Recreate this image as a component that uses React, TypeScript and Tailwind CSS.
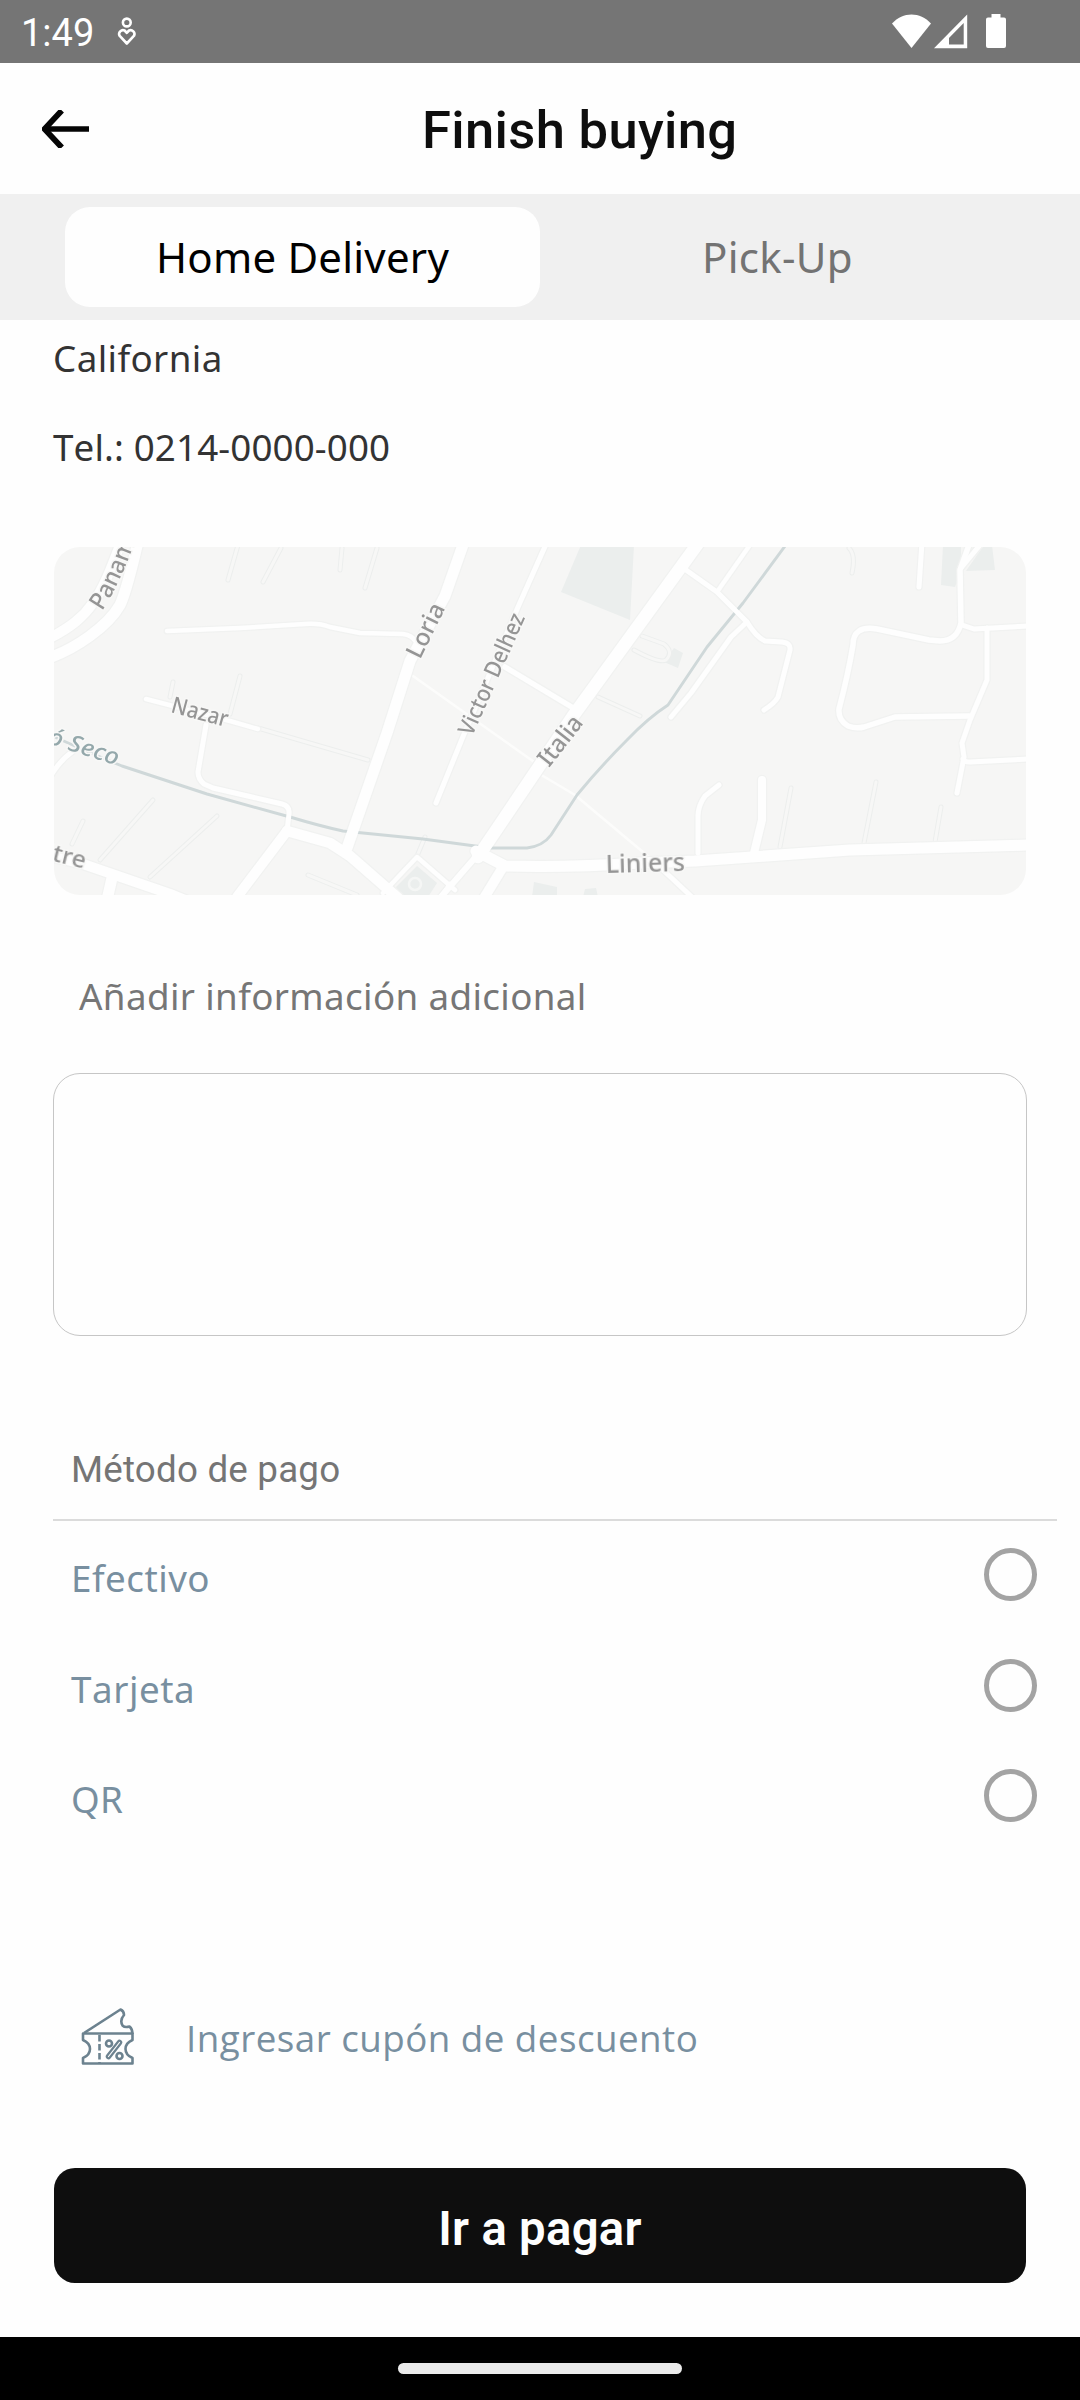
import React from 'react';

function StatusBar() {
  return (
    <header className="flex h-[63px] items-center bg-[#757575] text-white">
      <span className="ml-[21px] mt-[3px] w-[74px] font-[Roboto,sans-serif] text-[38px] leading-[60px]">1:49</span>
      <svg className="ml-[20px]" width="24" height="63" viewBox="115 0 24 63" fill="none" stroke="currentColor" strokeWidth="2.6">
        <circle cx="126.800" cy="22.5" r="3.9" />
        <path d="M126.800 43.500l-7.300-7.800a3.900 3.900 0 0 1 5.100-5.200l2.200 2.400 2.200-2.400a3.900 3.900 0 0 1 5.100 5.200z" strokeLinejoin="round" />
      </svg>
      <svg className="ml-auto mr-[70px]" width="120" height="63" viewBox="890 0 120 63" fill="currentColor">
        <path d="M892 23.5C903 11.5 920 11.5 931 23.5L911.5 48z" />
        <path fillRule="evenodd" d="M967.2 14.5V48.3H934zM963.7 23L949 38V44.5H963.7z" />
        <path d="M991.5 16.5V14h9v3.5h3.5a2 2 0 0 1 2 2V46a2 2 0 0 1-2 2h-16a2 2 0 0 1-2-2V19.500a2 2 0 0 1 2-2h3.500z" />
      </svg>
    </header>
  );
}

function TitleBar() {
  return (
    <div className="flex h-[131px] items-center">
      <svg className="ml-[42px]" width="48" height="38" viewBox="42 109.500 48 38" fill="none" stroke="#050505">
        <path d="M45 128.500H89" strokeWidth="5.600" />
        <path d="M61.800 110L44.500 128.500L61.800 147" strokeWidth="5.800" />
      </svg>
      <h1 className="ml-[332px] whitespace-nowrap pt-[3px] font-[Roboto,sans-serif] text-[52.500px] font-medium leading-[60px] tracking-[0.35px] text-[#0e0e0e]">
        Finish buying
      </h1>
    </div>
  );
}

function Tabs() {
  return (
    <div className="flex h-[126px] items-center bg-[#f0f0f0] px-[65px] text-[42px]">
      <button className="h-[100px] w-[475px] rounded-[25px] bg-[#fefefe] pb-[2px] tracking-[0.22px] text-black">Home Delivery</button>
      <button className="h-[100px] w-[475px] pb-[2px] tracking-[0.3px] text-[#737373]">Pick-Up</button>
    </div>
  );
}

const streets: { d: string; w: number }[] = [
  { d: 'M46 640C72 627 84 616 93 603C104 588 112 566 120 545', w: 10 },
  { d: 'M46 659C76 649 108 626 120 605C127 590 132 566 138 542', w: 11 },
  { d: 'M167 631L240 628L305 624Q320 623 330 627L360 633L403 634Q412 635 416 642', w: 4.5 },
  { d: 'M464 542L445 596L410 661L387 733L347 848', w: 11 },
  { d: 'M146 699L173 706L230 721L258 729', w: 4.5 },
  { d: 'M206 725L198 772Q198 779 204 784L213 788L282 804Q290 806 289 814L287 831', w: 5 },
  { d: 'M287 831L330 843L350 856L398 898', w: 10.5 },
  { d: 'M287 831L237 897', w: 10 },
  { d: 'M46 855L83 864L173 895L190 902', w: 10 },
  { d: 'M112 878L107 900', w: 11 },
  { d: 'M48 780Q60 760 72 752', w: 5 },
  { d: 'M547 542L518 607L462 739L436 803', w: 5 },
  { d: 'M505 667L575 709', w: 5.5 },
  { d: 'M699 542L573 716L538 768L480 852L440 898', w: 6 },
  { d: 'M699 542L573 716L538 768L478 857', w: 12.5 },
  { d: 'M476 851L505 866C540 867 580 867 640 863L695 861L850 850L1030 845', w: 11 },
  { d: 'M503 867L484 898', w: 10 },
  { d: 'M383 893L417 857L455 890M450 884L440 898', w: 4.5 },
  { d: 'M686 570L717 592L747 622Q756 637 765 641L782 642Q791 643 790 650L778 697Q775 703 764 710', w: 5 },
  { d: 'M752 542L717 592', w: 4.5 },
  { d: 'M747 622L731 637L691 693L671 717', w: 5 },
  { d: 'M922 542L919 587', w: 5 },
  { d: 'M970 542L960 570L961 623Q957 641 940 641L929 640L877 629Q853 625 853 645Q848 675 839 709Q838 720 848 726Q856 729 864 727L895 717L969 716', w: 5.5 },
  { d: 'M980 545L961 568', w: 5 },
  { d: 'M962 625L974 629L1030 626', w: 5 },
  { d: 'M987 628L987 680L970 720L962 743L964 757L957 793', w: 5 },
  { d: 'M963 759Q964 762 970 762L1030 759', w: 5 },
  { d: 'M719 785L705 796Q698 806 698 816L698 853', w: 5 },
  { d: 'M762 780L762 820L754 853', w: 8 },
  { d: 'M662 869L694 899', w: 5 },
];

const alleys: string[] = [
  'M238 545L228 580', 'M281 548L263 582', 'M342 548L340 570', 'M377 548L365 588',
  'M240 676L230 714', 'M173 682L170 697', 'M153 800L100 860', 'M217 816L150 877',
  'M83 821L72 844', 'M308 875L357 895', 'M258 728L368 760', 'M425 837L417 856',
  'M791 788L780 847', 'M876 782L864 843', 'M941 807L935 842', 'M849 548Q856 555 852 573',
  'M598 697L640 716', 'M642 636L664 644Q674 652 666 660Q660 664 634 650',
];

const labels: { t: string; x: number; y: number; r: number; l: number; s: number }[] = [
  { t: 'Loria', x: 420, y: 660, r: -64, l: 58, s: 24 },
  { t: 'Victor Delhez', x: 472, y: 737, r: -66, l: 131, s: 23 },
  { t: 'Italia', x: 549, y: 768, r: -52, l: 57, s: 24 },
  { t: 'Nazar', x: 170, y: 712, r: 15, l: 58, s: 23 },
  { t: 'Liniers', x: 606, y: 873, r: -1.5, l: 79, s: 25 },
];

function DeliveryMap() {
  return (
    <svg className="mt-[75px] block w-[972px] rounded-[26px]" height="348" viewBox="54 547 972 348">
      <rect x="54" y="547" width="972" height="348" fill="#f6f6f5" />
      <g fill="#ebeeed">
        <path d="M581 545L634 545L630 620L561 592Z" />
        <path d="M674 648L683 653L678 668L664 662Z" />
        <path d="M943 545H961V570L955 587L941 585Z" />
        <path d="M966 571L984 545H992L995 570Z" />
        <path d="M534 882L557 887V897H532Z" />
        <path d="M585 889L596 888L598 897H583Z" />
        <path d="M417 866L437 883L428 897H400L396 887Z" />
      </g>
      <g fill="none" strokeLinecap="round" strokeLinejoin="round" className="blur-[0.4px]">
        <g stroke="#eceeed" strokeWidth="5">{alleys.map((d) => <path key={d} d={d} />)}</g>
        <g stroke="#f7f7f6" strokeWidth="3">{alleys.map((d) => <path key={d} d={d} />)}</g>
        <path d="M413 676L537 764M538 773L575 795L662 868" stroke="#fcfcfb" strokeWidth="2.500" />
        <g stroke="#f1f2f1">{streets.map(({ d, w }) => <path key={d} d={d} strokeWidth={w + 2.5} />)}</g>
        <path d="M46 733Q90 753 122 766L207 794L290 817Q320 826 343 831L423 839L490 848H527Q543 846 551 835L577 795Q600 767 627 740Q648 718 668 705L707 647L743 603L788 542" stroke="#cfd8d9" strokeWidth="2.900" />
        <g stroke="#fefefe">{streets.map(({ d, w }) => <path key={d} d={d} strokeWidth={w} />)}</g>
        <circle cx="415" cy="884" r="6" stroke="#f5f6f5" strokeWidth="2.500" />
      </g>
      <g fill="#959595" fontWeight="500" stroke="#f8f8f7" strokeWidth="3" paintOrder="stroke" fontFamily="'Noto Sans', sans-serif" className="blur-[0.6px]">
        {labels.map(({ t, x, y, r, l, s }) => (
          <text key={t} transform={`translate(${x} ${y}) rotate(${r})`} textLength={l} lengthAdjust="spacingAndGlyphs" fontSize={s}>{t}</text>
        ))}
        <path id="avenue" d="M102 611Q121 584 141 524" fill="none" stroke="none" />
        <text fontSize="24"><textPath href="#avenue" textLength="76" lengthAdjust="spacingAndGlyphs">Panam</textPath></text>
        <text transform="translate(47 743) rotate(18)" fontSize="23" fontStyle="italic" fill="#94a8ab" textLength="73" lengthAdjust="spacingAndGlyphs">ó Seco</text>
        <text transform="translate(45 859) rotate(14)" fontSize="24" textLength="40" lengthAdjust="spacingAndGlyphs">itre</text>
      </g>
    </svg>
  );
}

const methods = [
  { name: 'Efectivo', style: 'tracking-[0.5px]' },
  { name: 'Tarjeta', style: 'tracking-[0.55px] [font-kerning:none]' },
  { name: 'QR', style: 'tracking-[0.3px]' },
];

function PaymentMethods() {
  return (
    <section className="mt-[109px] -mr-[31px]">
      <h2 className="pl-[17px] font-[Roboto,sans-serif] leading-[50px] tracking-[0.2px] text-[#757575]">Método de pago</h2>
      <div className="-ml-px mt-[24px] h-[2px] bg-[#dbdbdb]" />
      <div className="flex flex-col gap-[57.500px] pl-[17px] pr-[20px] pt-[27px]">
        {methods.map(({ name, style }) => (
          <label key={name} className="flex h-[53px] items-center justify-between text-[#788fa0]">
            <span className={`pt-[8px] leading-[53px] ${style}`}>{name}</span>
            <span className="size-[53px] rounded-full border-5 border-[#a3a3a3]" />
          </label>
        ))}
      </div>
    </section>
  );
}

function CouponIcon() {
  return (
    <svg width="56" height="60" viewBox="80 2006 56 60" fill="none" stroke="#6c828f" strokeWidth="2.600" strokeLinejoin="round">
      <path d="M83 2033.500H132.500V2040Q125.500 2043 125.500 2049T132.500 2058V2063.500H83V2058Q90 2055 90 2049T83 2040Z" />
      <path d="M84 2033L120.500 2009.500Q124 2011 124 2015Q119.500 2020 122.500 2025.500Q125 2028 129.500 2026.500Q132.500 2029 132.500 2034" />
      <path d="M99.500 2035V2063" strokeDasharray="6.500 2.500" />
      <circle cx="109" cy="2043.500" r="3" />
      <circle cx="119.500" cy="2056" r="3" />
      <path d="M119.500 2042.500L108.500 2056.500" strokeWidth="5.500" strokeLinecap="round" />
      <path d="M119.500 2042.500L108.500 2056.500" stroke="#fefefe" strokeWidth="1.200" strokeLinecap="round" />
    </svg>
  );
}

export default function App() {
  return (
    <div className="flex h-[2400px] w-[1080px] flex-col overflow-hidden bg-[#fefefe] font-['Noto_Sans',sans-serif]">
      <StatusBar />
      <TitleBar />
      <Tabs />
      <main className="flex flex-col px-[54px] pt-[13px] text-[36.750px]">
        <p className="-ml-px leading-[50px] tracking-[0.4px] text-[#333333]">California</p>
        <p className="-ml-px mt-[39px] leading-[50px] tracking-[0.13px] text-[#333333] [font-kerning:none]">Tel.: 0214-0000-000</p>
        <DeliveryMap />
        <label htmlFor="notes" className="mt-[76px] pl-[25px] leading-[50px] tracking-[0.37px] text-[#767676]">
          Añadir información adicional
        </label>
        <textarea id="notes" className="-mx-px mt-[52px] h-[263px] resize-none rounded-[27px] border-[1.500px] border-[#c6c6c6] bg-transparent" />
        <PaymentMethods />
        <div className="mt-[184px] flex h-[60px] items-center pl-[26px]">
          <CouponIcon />
          <span className="ml-[50px] pt-[5px] font-['Open_Sans',sans-serif] font-medium tracking-[0.47px] text-[#788fa0]">
            Ingresar cupón de descuento
          </span>
        </div>
        <button className="mt-[102px] h-[115px] rounded-[21px] bg-[#0e0e0e] pt-[7px] font-[Roboto,sans-serif] text-[47.250px] font-semibold tracking-[0.3px] text-[#fefefe]">
          Ir a pagar
        </button>
      </main>
      <nav className="mt-auto flex h-[63px] justify-center bg-black pt-[26px]">
        <span className="h-[11px] w-[284px] rounded-full bg-[#ebebeb]" />
      </nav>
    </div>
  );
}
